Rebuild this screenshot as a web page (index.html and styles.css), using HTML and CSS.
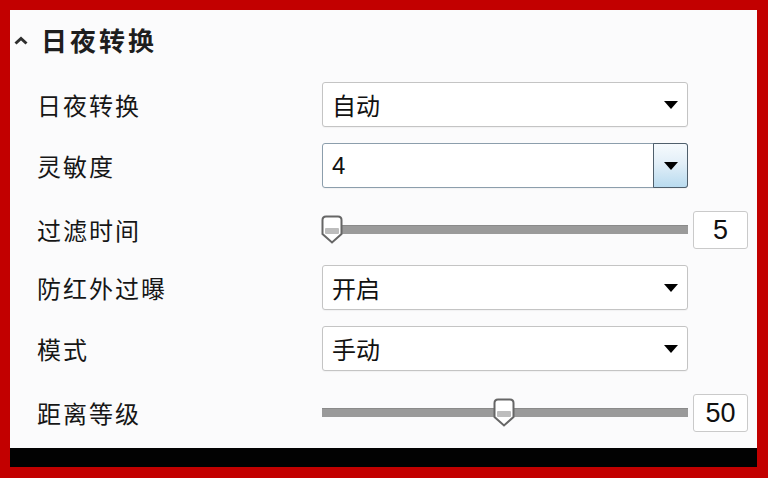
FILE: index.html
```html
<!DOCTYPE html>
<html lang="zh">
<head>
<meta charset="utf-8">
<link rel="stylesheet" href="styles.css">
</head>
<body>
<div class="frame">
  <div class="panel">
    <div class="heading">
      <svg class="chevron" width="14" height="9" viewBox="0 0 14 9"><path d="M1.5 7.5 L7 2.5 L12.5 7.5" fill="none" stroke="#2e2e2e" stroke-width="3"/></svg>
      <span class="heading-text">日夜转换</span>
    </div>
    <div class="row">
      <div class="label">日夜转换</div>
      <div class="select"><span class="value">自动</span><span class="arrow"></span></div>
    </div>
    <div class="row">
      <div class="label">灵敏度</div>
      <div class="select focused"><span class="value num">4</span><span class="btn"><span class="arrow"></span></span></div>
    </div>
    <div class="row slider-row">
      <div class="label">过滤时间</div>
      <div class="slider">
        <div class="track">
          <svg class="thumb" style="left:-1px" width="22" height="29" viewBox="0 0 22 29"><path d="M5 1.5 H17 Q20.5 1.5 20.5 5 V19 L11 27.5 L1.5 19 V5 Q1.5 1.5 5 1.5 Z" fill="#fff" stroke="#666" stroke-width="2"/><rect x="4" y="13" width="14" height="6" rx="1" fill="#bdbdbd"/></svg>
        </div>
        <div class="numbox">5</div>
      </div>
    </div>
    <div class="row">
      <div class="label">防红外过曝</div>
      <div class="select"><span class="value">开启</span><span class="arrow"></span></div>
    </div>
    <div class="row">
      <div class="label">模式</div>
      <div class="select"><span class="value">手动</span><span class="arrow"></span></div>
    </div>
    <div class="row slider-row">
      <div class="label">距离等级</div>
      <div class="slider">
        <div class="track">
          <svg class="thumb" style="left:171px" width="22" height="29" viewBox="0 0 22 29"><path d="M5 1.5 H17 Q20.5 1.5 20.5 5 V19 L11 27.5 L1.5 19 V5 Q1.5 1.5 5 1.5 Z" fill="#fff" stroke="#666" stroke-width="2"/><rect x="4" y="13" width="14" height="6" rx="1" fill="#bdbdbd"/></svg>
        </div>
        <div class="numbox">50</div>
      </div>
    </div>
  </div>
  <div class="blackbar"></div>
</div>
</body>
</html>
```

FILE: styles.css
```css
html, body {
  margin: 0;
  padding: 0;
}
body {
  width: 768px;
  height: 478px;
  background: #c20000;
  overflow: hidden;
  font-family: "Noto Sans CJK SC", "Liberation Sans", sans-serif;
  color: #151515;
}
.frame {
  padding: 10px 11px 11px 10px;
  display: flex;
  flex-direction: column;
}
.panel {
  height: 438px;
  background: #fbfbfc;
  display: flex;
  flex-direction: column;
}
.blackbar {
  height: 19px;
  background: #020202;
}
.heading {
  box-sizing: border-box;
  height: 64px;
  display: flex;
  align-items: center;
  padding-left: 4px;
  padding-bottom: 4px;
}
.chevron {
  margin-right: 13px;
  margin-top: 0;
}
.heading-text {
  font-size: 26px;
  font-weight: 700;
  letter-spacing: 3px;
  color: #1e1e1e;
  line-height: 1;
}
.row {
  height: 61px;
  display: flex;
  align-items: center;
  padding-left: 27px;
}
.slider-row {
  padding-top: 6px;
  height: 55px;
}
.label {
  width: 285px;
  font-size: 24px;
  letter-spacing: 2px;
  line-height: 1;
  color: #161616;
}
.select {
  box-sizing: border-box;
  width: 366px;
  height: 45px;
  border: 1px solid #c4c4c4;
  border-radius: 3px;
  background: #fff;
  display: flex;
  align-items: center;
  justify-content: space-between;
  padding: 0 9px 0 9px;
  box-shadow: 0 1px 1px rgba(0,0,0,0.04);
}
.select .value {
  font-size: 24px;
  line-height: 1;
  color: #111;
}
.select .value.num {
  font-family: "Liberation Sans", sans-serif;
  font-size: 24px;
}
.arrow {
  width: 0;
  height: 0;
  border-left: 7px solid transparent;
  border-right: 7px solid transparent;
  border-top: 8px solid #000;
}
.select.focused {
  border-color: #8c9eac;
  padding-right: 0;
}
.btn {
  box-sizing: border-box;
  width: 35px;
  height: 45px;
  margin: -1px -1px -1px 0;
  border: 1.5px solid #4f5f6c;
  border-radius: 0 3px 3px 0;
  background: linear-gradient(#f6fafd, #e2eff8 45%, #b9dbef);
  display: flex;
  align-items: center;
  justify-content: center;
}
.slider {
  display: flex;
  align-items: center;
  gap: 5px;
}
.track {
  position: relative;
  box-sizing: border-box;
  width: 366px;
  height: 9px;
  background: #9a9a9a;
  border-top: 1px solid #8a8a8a;
}
.thumb {
  position: absolute;
  top: -11px;
}
.numbox {
  box-sizing: border-box;
  width: 55px;
  height: 38px;
  border: 1px solid #cacaca;
  border-radius: 3px;
  background: #fff;
  font-family: "Liberation Sans", sans-serif;
  font-size: 27px;
  line-height: 36px;
  text-align: center;
  color: #111;
}
```
